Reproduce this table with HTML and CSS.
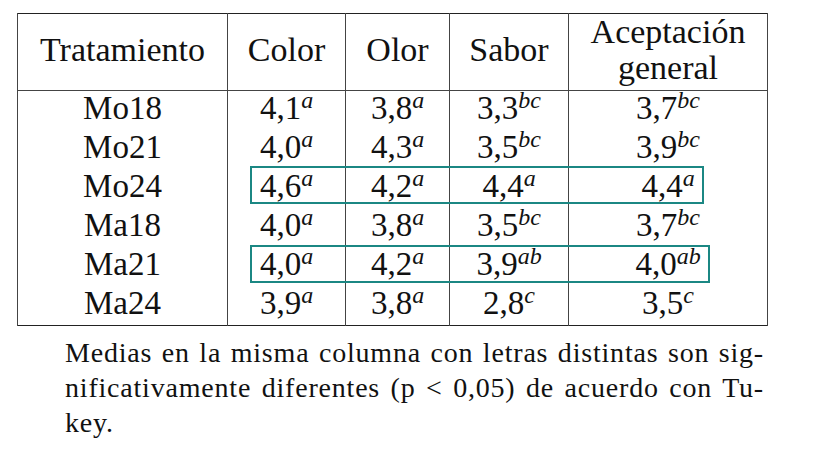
FILE: index.html
```html
<!DOCTYPE html>
<html>
<head>
<meta charset="utf-8">
<title>Tabla de evaluación sensorial</title>
<meta name="viewport" content="width=device-width, initial-scale=1">
<link rel="stylesheet" href="styles.css">
</head>
<body>
  <div class="page">
    <div class="table-wrap">
      <table class="results">
        <colgroup>
          <col class="c-trat">
          <col class="c-color">
          <col class="c-olor">
          <col class="c-sabor">
          <col class="c-acep">
        </colgroup>
        <thead>
          <tr>
            <th>Tratamiento</th>
            <th>Color</th>
            <th>Olor</th>
            <th>Sabor</th>
            <th>Aceptación<br>general</th>
          </tr>
        </thead>
        <tbody>
          <tr>
            <td>Mo18</td>
            <td>4,1<span class="sup">a</span></td>
            <td>3,8<span class="sup">a</span></td>
            <td>3,3<span class="sup">bc</span></td>
            <td>3,7<span class="sup">bc</span></td>
          </tr>
          <tr>
            <td>Mo21</td>
            <td>4,0<span class="sup">a</span></td>
            <td>4,3<span class="sup">a</span></td>
            <td>3,5<span class="sup">bc</span></td>
            <td>3,9<span class="sup">bc</span></td>
          </tr>
          <tr>
            <td>Mo24</td>
            <td>4,6<span class="sup">a</span></td>
            <td>4,2<span class="sup">a</span></td>
            <td>4,4<span class="sup">a</span></td>
            <td>4,4<span class="sup">a</span></td>
          </tr>
          <tr>
            <td>Ma18</td>
            <td>4,0<span class="sup">a</span></td>
            <td>3,8<span class="sup">a</span></td>
            <td>3,5<span class="sup">bc</span></td>
            <td>3,7<span class="sup">bc</span></td>
          </tr>
          <tr>
            <td>Ma21</td>
            <td>4,0<span class="sup">a</span></td>
            <td>4,2<span class="sup">a</span></td>
            <td>3,9<span class="sup">ab</span></td>
            <td>4,0<span class="sup">ab</span></td>
          </tr>
          <tr>
            <td>Ma24</td>
            <td>3,9<span class="sup">a</span></td>
            <td>3,8<span class="sup">a</span></td>
            <td>2,8<span class="sup">c</span></td>
            <td>3,5<span class="sup">c</span></td>
          </tr>
        </tbody>
      </table>

      <!-- highlighted rows -->
      <div class="highlight highlight-mo24"></div>
      <div class="highlight highlight-ma21"></div>
    </div>

    <p class="note">
      <span class="line full">Medias en la misma columna con letras distintas son sig-</span>
      <span class="line full">nificativamente diferentes (p &lt; 0,05) de acuerdo con Tu-</span>
      <span class="line">key.</span>
    </p>
  </div>
</body>
</html>
```

FILE: styles.css
```css
body {
  margin: 0;
  background: #ffffff;
  color: #111111;
  font-family: "Liberation Serif", "Times New Roman", serif;
}

.page {
  padding: 13px 0 0 17px;
}

.table-wrap {
  position: relative;
  width: 750px;
}

.results {
  border-collapse: collapse;
  table-layout: fixed;
  width: 750px;
  border: 1px solid #222;
}

.c-trat { width: 210px; }
.c-color { width: 118px; }
.c-olor { width: 104px; }
.c-sabor { width: 119px; }
.c-acep { width: 199px; }

th, td {
  text-align: center;
  border-left: 1px solid #444;
  border-right: 1px solid #444;
  padding: 0;
}

th {
  font-weight: normal;
  font-size: 34px;
  line-height: 36px;
  height: 72px;
  padding-bottom: 4px;
  border-bottom: 1px solid #444;
  vertical-align: middle;
}

td {
  font-size: 33px;
  line-height: 35px;
  height: 35px;
  padding-bottom: 4px;
  vertical-align: middle;
}

.sup {
  font-style: italic;
  font-size: 24px;
  line-height: 0;
  vertical-align: 11px;
}

.highlight {
  position: absolute;
  box-sizing: border-box;
  border: 2px solid #1b8783;
  height: 38px;
}

.highlight-mo24 {
  left: 233px;
  top: 153px;
  width: 454px;
}

.highlight-ma21 {
  left: 233px;
  top: 232px;
  width: 460px;
}

.note {
  margin: 9px 0 0 48px;
  width: 699px;
  font-size: 28px;
  line-height: 35px;
  letter-spacing: 0.8px;
}

.line {
  display: block;
}

.line.full {
  text-align: justify;
  text-align-last: justify;
}
```
